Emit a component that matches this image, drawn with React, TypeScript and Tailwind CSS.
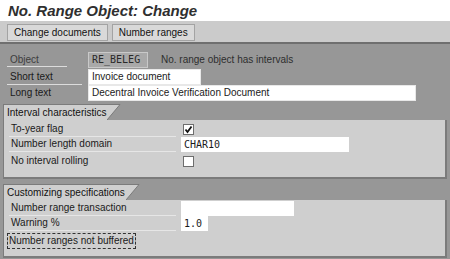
import React from 'react';

const Check = ({ checked }: { checked?: boolean }) => (
  <div className="w-[11px] h-[11px] shrink-0 bg-white border border-[#6d6d6d] flex items-center justify-center">
    {checked && (
      <svg width="9" height="9" viewBox="0 0 9 9">
        <path d="M1.5 4.5 L3.5 7 L7.5 1.5" stroke="#111" strokeWidth="1.8" fill="none" />
      </svg>
    )}
  </div>
);

const Row = ({ label, line = true, children }: { label: string; line?: boolean; children?: React.ReactNode }) => (
  <div className="grid grid-cols-[177px_1fr] items-center h-[15px]">
    <div className="h-full pl-[7px] pr-[5px] relative leading-[14px]">
      {label}
      {line && <div className="absolute left-[5px] right-[5px] bottom-0 h-px bg-[#e6e6e6]" />}
    </div>
    <div className="flex items-center">{children}</div>
  </div>
);

const GroupHeader = ({ title }: { title: string }) => (
  <div className="flex h-[16px]">
    <div className="bg-[#cfcfcf] border-t border-l border-[#7b7b7b] pl-[3px] pr-[1px] leading-[15px] text-[#111] whitespace-nowrap">
      {title}
    </div>
    <svg width="14" height="16" viewBox="0 0 14 16" className="block">
      <path d="M0 0.5 L13 0.5 L0 16 Z" fill="#cfcfcf" />
      <path d="M0 0.5 L13 0.5 L0 16" stroke="#7b7b7b" fill="none" />
    </svg>
  </div>
);

const mono = { fontFamily: '"DejaVu Sans Mono", monospace' };

export default function App() {
  return (
    <div className="w-[450px] h-[259px] bg-[#979797] text-[10px] text-[#1a1a1a] overflow-hidden" style={{ fontFamily: '"Liberation Sans", Arial, sans-serif' }}>
      <div className="h-[21px] bg-white pl-[8px]">
        <div className="text-[15px] font-bold italic text-[#2f2f2f] leading-[21px]">No. Range Object: Change</div>
      </div>
      <div className="h-[23px] bg-[#cbcbcb] border-b-2 border-[#6f6f6f] flex items-center gap-[4px] pl-[7px] pt-[1px]">
        <div className="h-[17px] px-[6px] bg-[#d9d9d9] border border-[#a3a3a3] leading-[15px] text-[#111]">Change documents</div>
        <div className="h-[17px] px-[6px] bg-[#d9d9d9] border border-[#a3a3a3] leading-[15px] text-[#111]">Number ranges</div>
      </div>

      <div className="pt-[7px]">
        <div className="flex items-center h-[17px]">
          <div className="w-[84px] h-full pl-[10px] relative text-[#3d3d3d] leading-[17px]">
            Object
            <div className="absolute left-[7px] w-[60px] bottom-[1px] h-px bg-[#dcdcdc]" />
          </div>
          <div className="ml-[4px] w-[60px] h-[16px] bg-[#a9a9a9] border border-[#c9c9c9] pl-[3px] leading-[14px] text-[10px] text-[#2a2a2a]" style={mono}>
            RE_BELEG
          </div>
          <div className="ml-[13px] text-[#2e2e2e]">No. range object has intervals</div>
        </div>
        <div className="flex items-center h-[17px]">
          <div className="w-[84px] h-full pl-[10px] relative leading-[17px]">
            Short text
            <div className="absolute left-[7px] w-[75px] bottom-[0px] h-px bg-[#dcdcdc]" />
          </div>
          <div className="ml-[4px] w-[113px] h-[16px] bg-white border border-[#e8e8e8] pl-[3px] leading-[14px]">Invoice document</div>
        </div>
        <div className="flex items-center h-[16px]">
          <div className="w-[84px] h-full pl-[10px] leading-[16px]">Long text</div>
          <div className="ml-[4px] w-[328px] h-[16px] bg-white border border-[#e8e8e8] pl-[3px] leading-[14px]">Decentral Invoice Verification Document</div>
        </div>
      </div>

      <div className="mx-[3px] mt-[3px]">
        <GroupHeader title="Interval characteristics" />
        <div className="bg-[#cfcfcf] border border-t-0 border-[#7b7b7b] border-r-2 border-b-2 h-[59px] pt-[2px]">
          <Row label="To-year flag"><div className="pl-[2px]"><Check checked /></div></Row>
          <Row label="Number length domain">
            <div className="w-[168px] h-[15px] bg-white pl-[3px] leading-[15px] text-[10px]" style={mono}>CHAR10</div>
          </Row>
          <div className="mt-[2px]">
            <Row label="No interval rolling" line={false}><div className="pl-[2px]"><Check /></div></Row>
          </div>
        </div>
      </div>

      <div className="mx-[3px] mt-[5px]">
        <GroupHeader title="Customizing specifications" />
        <div className="bg-[#cfcfcf] border border-t-0 border-[#7b7b7b] border-r-2 border-b-2 h-[58px] pt-[1px]">
          <Row label="Number range transaction">
            <div className="w-[113px] h-[15px] bg-white" />
          </Row>
          <Row label="Warning %">
            <div className="w-[27px] h-[15px] bg-white pl-[3px] leading-[15px] text-[10px]" style={mono}>1.0</div>
          </Row>
          <div className="pl-[3px] mt-[2px]">
            <div className="inline-block border border-dashed border-[#333] px-[1px] leading-[14px] h-[16px]">Number ranges not buffered</div>
          </div>
        </div>
      </div>
    </div>
  );
}
